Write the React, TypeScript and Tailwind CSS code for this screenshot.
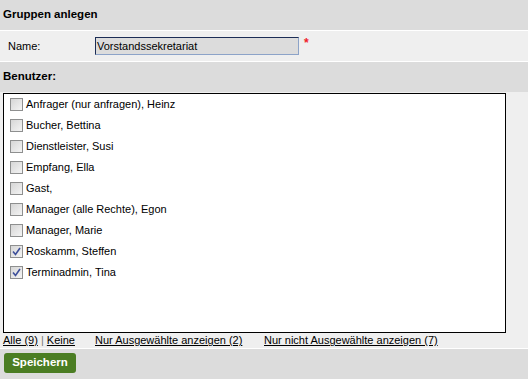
import React from "react";

interface Benutzer {
  name: string;
  checked: boolean;
}

const benutzer: Benutzer[] = [
  { name: "Anfrager (nur anfragen), Heinz", checked: false },
  { name: "Bucher, Bettina", checked: false },
  { name: "Dienstleister, Susi", checked: false },
  { name: "Empfang, Ella", checked: false },
  { name: "Gast,", checked: false },
  { name: "Manager (alle Rechte), Egon", checked: false },
  { name: "Manager, Marie", checked: false },
  { name: "Roskamm, Steffen", checked: true },
  { name: "Terminadmin, Tina", checked: true },
];

const Checkbox: React.FC<{ checked: boolean }> = ({ checked }) => (
  <span className="relative flex h-[13px] w-[13px] flex-shrink-0 items-center justify-center border border-[#8e8f8f] bg-gradient-to-br from-[#d6d6d6] to-[#f4f4f4]">
    {checked && (
      <svg width="9" height="9" viewBox="0 0 9 9" className="absolute">
        <path d="M1 4.5 L3.5 7.5 L8 1" fill="none" stroke="#3d4f9a" strokeWidth="1.6" />
      </svg>
    )}
  </span>
);

export default function App() {
  return (
    <div
      className="w-[528px] h-[379px] bg-[#efefef] text-[11px] text-black"
      style={{ fontFamily: '"Liberation Sans", Arial, sans-serif' }}
    >
      <div className="flex h-[30px] items-center bg-[#dcdcdc] px-[3px] text-[11.5px] font-bold border-b border-white box-content">
        Gruppen anlegen
      </div>

      <div className="flex h-[30px] items-center border-b border-white box-content">
        <span className="w-[95px] pl-[8px]">Name:</span>
        <div className="flex h-[18px] w-[204px] items-center border border-t-[#1c2d55] border-l-[#1c2d55] border-b-[#8ca3c8] border-r-[#8ca3c8] bg-[#dcdcdc] px-[1px]">
          Vorstandssekretariat
        </div>
        <span className="ml-[5px] -mt-[7px] font-bold text-[12px] text-[#f0202a]">*</span>
      </div>

      <div className="flex h-[30px] items-center bg-[#dcdcdc] px-[3px] text-[11.5px] font-bold">
        Benutzer:
      </div>

      <div className="pt-[1px]">
        <div className="ml-[3px] flex h-[240px] w-[503px] flex-col border border-black bg-white">
          {benutzer.map((b) => (
            <label key={b.name} className="flex h-[21px] items-center gap-[3px] pl-[6px]">
              <Checkbox checked={b.checked} />
              <span>{b.name}</span>
            </label>
          ))}
        </div>
      </div>

      <div className="flex h-[15px] items-center border-b border-white box-content px-[3px]">
        <span className="w-[92px]">
          <a className="underline">Alle (9)</a>
          <span className="text-[#777]"> | </span>
          <a className="underline">Keine</a>
        </span>
        <a className="w-[169px] underline">Nur Ausgewählte anzeigen (2)</a>
        <a className="underline">Nur nicht Ausgewählte anzeigen (7)</a>
      </div>

      <div className="h-[30px] bg-[#dcdcdc] pl-[4px] pt-[4px]">
        <button className="h-[20px] w-[72px] rounded-[3px] bg-[#4b7d23] text-[11.5px] font-bold text-white">
          Speichern
        </button>
      </div>
    </div>
  );
}
